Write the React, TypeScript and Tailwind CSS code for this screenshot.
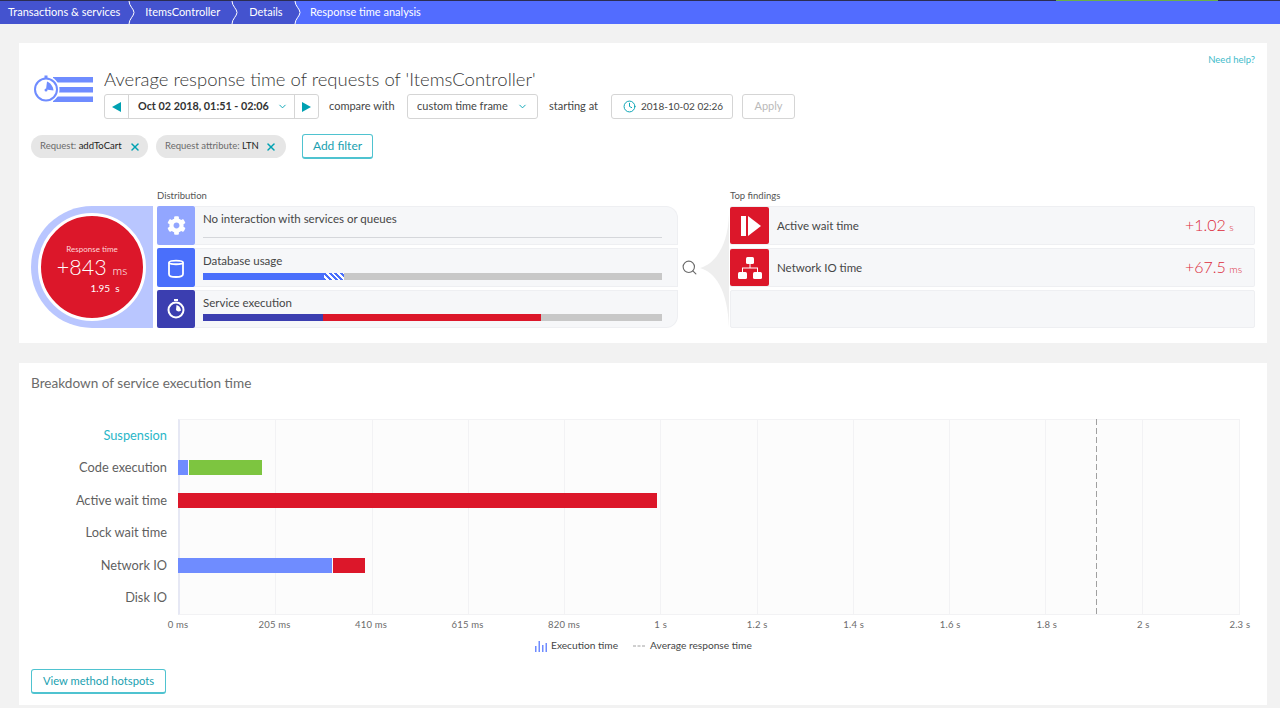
import { ChevronDown, Clock, Search, X } from "lucide-react";
import { FaCog } from "react-icons/fa";

const ticks = ["0 ms", "205 ms", "410 ms", "615 ms", "820 ms", "1 s", "1.2 s", "1.4 s", "1.6 s", "1.8 s", "2 s", "2.3 s"];

function CrumbArrow({ className, last }: { className: string; last?: boolean }) {
  return (
    <svg width="14" height="23" viewBox="0 0 14 23" className={className}>
      {last && <path d="M5 0H14V23H5C5 18 10 15 10 11.5C10 8 5 5 5 0Z" fill="#526cff" />}
      <path d="M5 0C5 5 10 8 10 11.5C10 15 5 18 5 23" fill="none" stroke="#fff" strokeWidth="1" />
    </svg>
  );
}

function HeaderIcon() {
  return (
    <svg width="60" height="30" viewBox="0 0 60 30" className="block">
      <rect x="20" y="2" width="40" height="5.5" fill="#6f8cff" />
      <rect x="20" y="12" width="40" height="5.5" fill="#6f8cff" />
      <rect x="20" y="21.5" width="40" height="5.5" fill="#6f8cff" />
      <circle cx="13" cy="14.5" r="13.5" fill="#fff" />
      <circle cx="13" cy="14.5" r="11" fill="#fff" stroke="#6f8cff" strokeWidth="2" />
      <rect x="11.5" y="0.5" width="3" height="2.5" fill="#6f8cff" />
      <path d="M13 14.5L14 6.5C17 7.5 20 11 20.5 15.5Z" fill="#6f8cff" />
      <circle cx="13" cy="15" r="1.5" fill="#6f8cff" />
    </svg>
  );
}

function Stopwatch() {
  return (
    <svg width="18" height="20" viewBox="0 0 18 20">
      <rect x="7" y="0" width="4" height="2" fill="#fff" />
      <circle cx="9" cy="11" r="7.5" fill="none" stroke="#fff" strokeWidth="2" />
      <path d="M9 11L9.5 6C12 6.5 13.5 8.5 14 11.5C12 13 10 12.5 9 11Z" fill="#fff" />
    </svg>
  );
}

function DistRow({ height, tile, icon, label, rounded, children }: { height: string; tile: string; icon: React.ReactNode; label: string; rounded: string; children: React.ReactNode }) {
  return (
    <div className={`flex ${height}`}>
      <div className={`flex w-[38px] shrink-0 items-center justify-center rounded-[2px] ${tile}`}>{icon}</div>
      <div className={`flex flex-1 flex-col border border-l-0 border-[#eeeff2] bg-[#f6f7f9] pl-[8px] pr-[15px] ${rounded}`}>
        <span className="mt-[5px] h-[14px] text-[11.5px] leading-[14px] text-[#454646]">{label}</span>
        <div className="mt-auto mb-[6px] flex h-[7px]">{children}</div>
      </div>
    </div>
  );
}

function Finding({ icon, label, value, unit }: { icon: React.ReactNode; label: string; value: string; unit: string }) {
  return (
    <div className="flex h-[39px] rounded-[2px] border border-l-0 border-[#eeeff2] bg-[#f6f7f9]">
      <div className="flex w-[39px] shrink-0 items-center justify-center rounded-[2px] bg-[#dc172a]">{icon}</div>
      <span className="ml-[8px] flex-1 self-center text-[11.5px] text-[#454646]">{label}</span>
      <span className="w-[69px] self-center whitespace-nowrap text-[16px] font-light leading-[24px] text-[#dc2a3a]">
        {value} <span className="-ml-[1px] text-[10.5px]">{unit}</span>
      </span>
    </div>
  );
}

function Row({ label, teal, children }: { label: string; teal?: boolean; children?: React.ReactNode }) {
  return (
    <div className="flex h-[32.5px] items-center">
      <span className={`w-[136px] shrink-0 text-right text-[12.8px] ${teal ? "text-[#2ab6c8]" : "text-[#5f5f5f]"}`}>{label}</span>
      <div className="ml-[11px] flex h-[15px] flex-1">{children}</div>
    </div>
  );
}

export default function App() {
  return (
    <div className="h-[708px] overflow-hidden bg-[#f2f2f2] font-['Lato','Liberation_Sans',sans-serif] text-[#454646]">
      {/* top bar */}
      <div className="relative h-[24px] border-t border-[#2b2d52] bg-[#526cff]">
        <div className="absolute left-[1056px] top-[-1px] h-[1px] w-[162px] bg-[#6bb04a]" />
        <div className="flex h-[23px] items-center whitespace-nowrap text-[11px] text-white">
          <div className="flex h-full w-[302px] shrink-0 items-center bg-[#4453cf] pl-[8px]">
            <span>Transactions &amp; services</span>
            <CrumbArrow className="ml-[4px] shrink-0" />
            <span className="ml-[7px]">ItemsController</span>
            <CrumbArrow className="ml-[7px] shrink-0" />
            <span className="ml-[8px]">Details</span>
            <CrumbArrow className="ml-[7px] shrink-0" last />
          </div>
          <span className="ml-[8px]">Response time analysis</span>
        </div>
      </div>

      {/* analysis card */}
      <div className="ml-[19px] mt-[19px] h-[300px] w-[1248px] bg-white px-[12px] pt-[11px]">
        <div className="flex h-[14px] justify-end text-[9.5px] leading-[12px] text-[#3fbccb]">Need help?</div>
        <div className="flex">
          <div className="w-[73px] shrink-0 pl-[2px] pt-[7px]">
            <HeaderIcon />
          </div>
          <div>
            <h1 className="h-[24px] whitespace-nowrap text-[18.5px] font-light leading-[22px] text-[#383838]">
              Average response time of requests of 'ItemsController'
            </h1>
            <div className="mt-[2px] flex h-[25px] items-center whitespace-nowrap text-[11px]">
              <div className="flex h-full w-[215px] rounded-[3px] border border-[#d5d5d5]">
                <div className="flex w-[24px] items-center justify-center border-r border-[#d5d5d5]">
                  <svg width="9" height="10" viewBox="0 0 9 10"><path d="M0 5L9 0V10Z" fill="#00a1b2" /></svg>
                </div>
                <div className="flex flex-1 items-center gap-[8px] border-r border-[#d5d5d5] pl-[9px] text-[10.8px] font-bold text-[#333]">
                  Oct 02 2018, 01:51 - 02:06
                  <ChevronDown size={11} strokeWidth={2} className="text-[#00a1b2]" />
                </div>
                <div className="flex w-[23px] items-center justify-center">
                  <svg width="9" height="10" viewBox="0 0 9 10"><path d="M9 5L0 0V10Z" fill="#00a1b2" /></svg>
                </div>
              </div>
              <span className="ml-[10px] w-[78px]">compare with</span>
              <div className="flex h-full w-[131px] items-center rounded-[3px] border border-[#d5d5d5] pl-[9px]">
                custom time frame
                <ChevronDown size={11} strokeWidth={2} className="ml-[9px] text-[#00a1b2]" />
              </div>
              <span className="ml-[11px] w-[62px]">starting at</span>
              <div className="flex h-full w-[122px] items-center rounded-[3px] border border-[#d5d5d5] pl-[11px]">
                <Clock size={13} strokeWidth={1.75} className="shrink-0 text-[#00a1b2]" />
                <span className="ml-[5px] text-[10px]">2018-10-02 02:26</span>
              </div>
              <div className="ml-[9px] flex h-full w-[53px] items-center justify-center rounded-[3px] border border-[#d5d5d5] text-[#b9b9b9]">Apply</div>
            </div>
          </div>
        </div>

        {/* filters */}
        <div className="mt-[15px] flex h-[25px] items-center whitespace-nowrap text-[9.5px]">
          <div className="flex h-[23px] w-[117px] items-center rounded-full bg-[#e6e6e6] pl-[9px]">
            <span className="text-[#6b6b6b]">Request:&nbsp;</span>
            <span className="text-[#222]">addToCart</span>
            <X size={12} strokeWidth={3} className="ml-[7px] text-[#00a1b2]" />
          </div>
          <div className="ml-[8px] flex h-[23px] w-[130px] items-center rounded-full bg-[#e6e6e6] pl-[9px]">
            <span className="text-[#6b6b6b]">Request attribute:&nbsp;</span>
            <span className="text-[#222]">LTN</span>
            <X size={12} strokeWidth={3} className="ml-[6px] text-[#00a1b2]" />
          </div>
          <div className="ml-[16px] flex h-[25px] w-[71px] items-center justify-center rounded-[3px] border border-b-2 border-[#4fc3d0] text-[12px] text-[#1a9fb0]">Add filter</div>
        </div>

        {/* distribution */}
        <div className="mt-[31px] flex items-end">
          <div className="flex h-[122px] w-[122px] shrink-0 items-center rounded-l-[61px] bg-[#b9c6ff] pl-[7px]">
            <div className="flex h-[108px] w-[108px] flex-col items-center rounded-full border-[3px] border-white bg-[#dc172a] pt-[27px] text-white">
              <span className="text-[8px] leading-[12px] text-[#ffd5d8]">Response time</span>
              <span className="whitespace-nowrap text-[21.5px] font-light leading-[24px]">
                +843 <span className="text-[12px]">ms</span>
              </span>
              <span className="-mt-[2px] ml-[26px] text-[10px] leading-[14px]">1.95&nbsp; s</span>
            </div>
          </div>
          <div className="ml-[4px] w-[521px] shrink-0">
            <div className="mb-[4px] h-[12px] text-[9.5px] leading-[12px] text-[#555]">Distribution</div>
            <div className="flex flex-col gap-[3px]">
              <DistRow height="h-[39px]" tile="bg-[#92a6ff]" icon={<FaCog size={19} className="text-white" />} label="No interaction with services or queues" rounded="rounded-tr-[12px]">
                <div className="mt-[6px] h-[1px] w-full bg-[#d5d7db]" />
              </DistRow>
              <DistRow
                height="h-[39px]"
                tile="bg-[#4a6ffb]"
                icon={
                  <svg width="16" height="20" viewBox="0 0 16 20" fill="none" stroke="#fff" strokeWidth="1.8">
                    <path d="M1 4.5C1 2 15 2 15 4.5V16C15 18.5 13 19 8 19C3 19 1 18.5 1 16Z" />
                    <path d="M1 4.5C1 6.8 15 6.8 15 4.5" />
                  </svg>
                }
                label="Database usage"
                rounded=""
              >
                <div className="w-[121px] bg-[#4a6ffb]" />
                <div className="w-[20px] bg-[repeating-linear-gradient(45deg,#4a6ffb,#4a6ffb_2px,#ffffff_2px,#ffffff_4px)]" />
                <div className="flex-1 bg-[#c8c8c8]" />
              </DistRow>
              <DistRow height="h-[38px]" tile="bg-[#3b3eb0]" icon={<Stopwatch />} label="Service execution" rounded="rounded-br-[12px]">
                <div className="w-[120px] bg-[#3b3eb0]" />
                <div className="w-[218px] bg-[#dc172a]" />
                <div className="flex-1 bg-[#c8c8c8]" />
              </DistRow>
            </div>
          </div>
          <div className="flex h-[122px] w-[52px] shrink-0 items-center pl-[3px]">
            <Search size={17} strokeWidth={1.6} className="shrink-0 text-[#6b6b6b]" />
            <svg width="30" height="122" viewBox="0 0 30 122" className="ml-[2px] shrink-0">
              <path d="M29 8C28 40 15 58 0 62C15 66 28 84 29 122Z" fill="#eeeeee" />
            </svg>
          </div>
          <div className="w-[525px] shrink-0">
            <div className="mb-[4px] h-[12px] text-[9.5px] leading-[12px] text-[#555]">Top findings</div>
            <div className="flex flex-col gap-[3px]">
              <Finding
                icon={
                  <svg width="26" height="24" viewBox="0 0 26 24" fill="#fff">
                    <rect x="4" y="2" width="5" height="20" />
                    <path d="M11 2L24 12L11 22Z" />
                  </svg>
                }
                label="Active wait time"
                value="+1.02"
                unit="s"
              />
              <Finding
                icon={
                  <svg width="26" height="24" viewBox="0 0 26 24" fill="#fff">
                    <rect x="9" y="1" width="8" height="7" rx="1.5" />
                    <rect x="1" y="16" width="9" height="7" rx="1.5" />
                    <rect x="16" y="16" width="9" height="7" rx="1.5" />
                    <path d="M12.5 8H13.5V11.5H21V16H20V12.5H6V16H5V11.5H12.5Z" />
                  </svg>
                }
                label="Network IO time"
                value="+67.5"
                unit="ms"
              />
              <div className="h-[38px] rounded-[2px] border border-[#eeeff2] bg-[#f6f7f9]" />
            </div>
          </div>
        </div>
      </div>

      {/* breakdown card */}
      <div className="ml-[19px] mt-[20px] h-[342px] w-[1248px] bg-white pl-[12px] pr-[27px] pt-[10px]">
        <h2 className="h-[20px] text-[13.6px] leading-[20px] text-[#6b6b6b]">Breakdown of service execution time</h2>
        <div className="relative mt-[26px] h-[196px]">
          <div className="absolute bottom-0 left-[147px] right-0 top-0 grid grid-cols-11 border border-l-2 border-[#f2f2f4] border-l-[#e6e8f4] bg-[#fcfcfc]">
            {ticks.slice(1, 11).map((t) => (
              <div key={t} className="border-r border-[#f2f2f4]" />
            ))}
          </div>
          <div className="absolute bottom-0 left-[1065px] top-0 w-[1px] bg-[repeating-linear-gradient(180deg,#a0a0a0,#a0a0a0_6px,transparent_6px,transparent_9px)]" />
          <div className="relative">
            <Row label="Suspension" teal />
            <Row label="Code execution">
              <div className="w-[10px] bg-[#6f8cff]" />
              <div className="ml-[1px] w-[73px] bg-[#7dc540]" />
            </Row>
            <Row label="Active wait time">
              <div className="w-[479px] bg-[#dc172a]" />
            </Row>
            <Row label="Lock wait time" />
            <Row label="Network IO">
              <div className="w-[154px] bg-[#6f8cff]" />
              <div className="ml-[1px] w-[32px] bg-[#dc172a]" />
            </Row>
            <Row label="Disk IO" />
          </div>
        </div>
        <div className="ml-[147px] mt-[3px] flex h-[14px] justify-between text-[9.5px] leading-[14px] tracking-[0.2px] text-[#6b6b6b]">
          {ticks.map((t) => (
            <div key={t} className="flex w-0 justify-center whitespace-nowrap">{t}</div>
          ))}
        </div>
        <div className="ml-[504px] mt-[7px] flex h-[14px] items-center text-[10.2px] text-[#454646]">
          <svg width="12" height="12" viewBox="0 0 12 12" fill="#6f8cff">
            <rect x="0" y="6" width="1.5" height="6" />
            <rect x="3.5" y="1" width="1.5" height="11" />
            <rect x="7" y="5" width="1.5" height="7" />
            <rect x="10.5" y="3" width="1.5" height="9" />
          </svg>
          <span className="ml-[4px]">Execution time</span>
          <svg width="12" height="2" viewBox="0 0 12 2" className="ml-[15px]">
            <path d="M0 1H12" stroke="#a0a0a0" strokeWidth="1" strokeDasharray="3 1.5" />
          </svg>
          <span className="ml-[5px]">Average response time</span>
        </div>
        <div className="mt-[16px] flex h-[25px] w-[135px] items-center justify-center rounded-[3px] border border-b-2 border-[#4fc3d0] text-[11.2px] text-[#1a9fb0]">View method hotspots</div>
      </div>
    </div>
  );
}
